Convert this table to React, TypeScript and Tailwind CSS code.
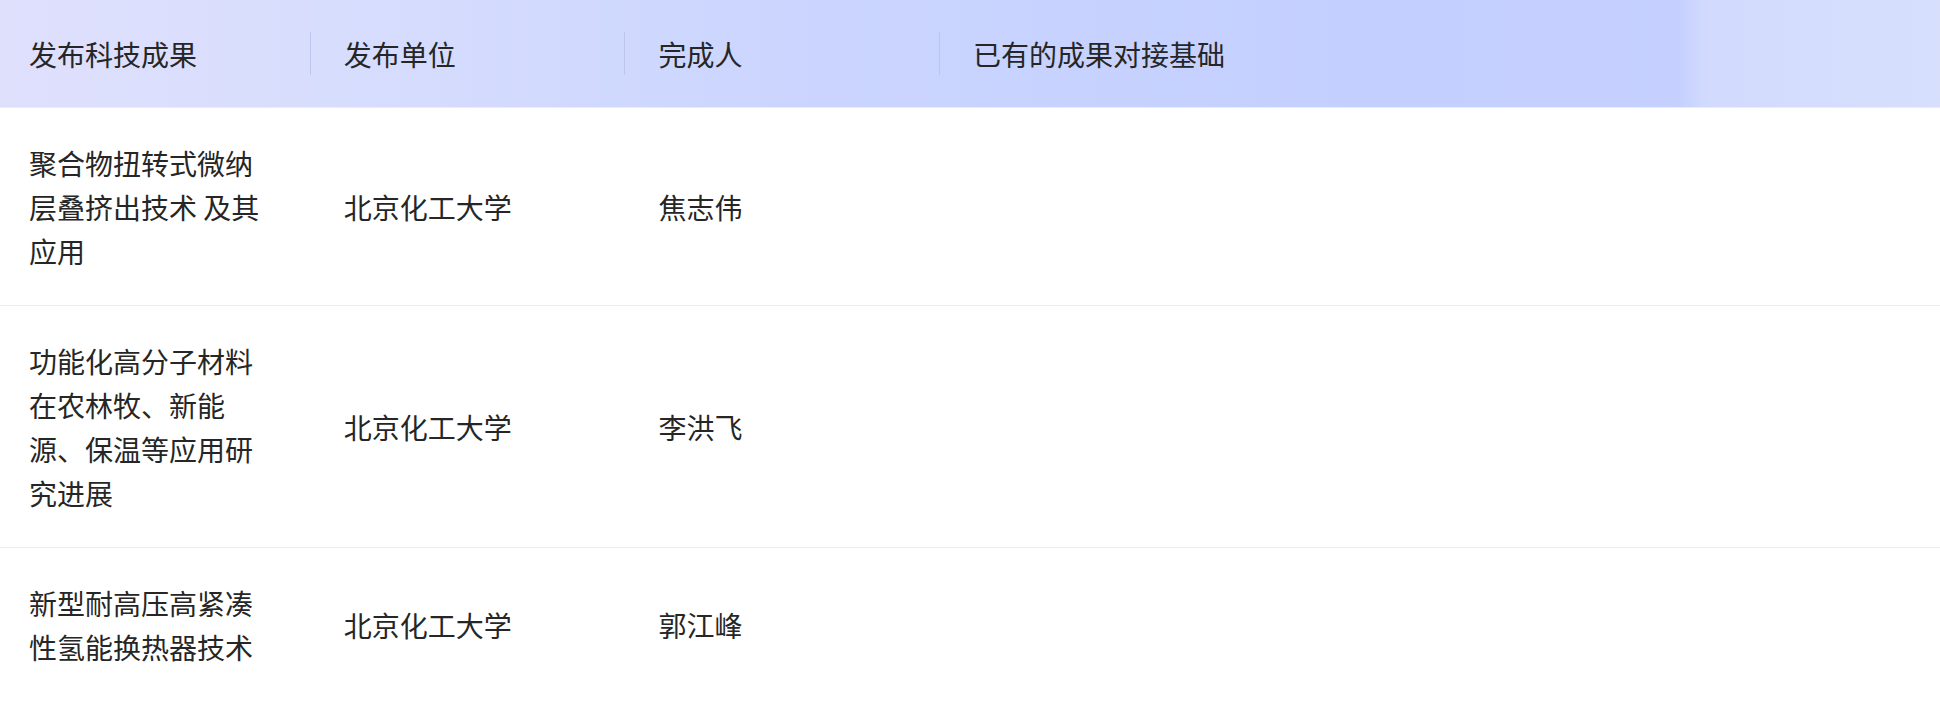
const columns = ["发布科技成果", "发布单位", "完成人", "已有的成果对接基础"];

const rows = [
  {
    title: "聚合物扭转式微纳层叠挤出技术 及其应用",
    unit: "北京化工大学",
    person: "焦志伟",
    basis: "",
  },
  {
    title: "功能化高分子材料在农林牧、新能源、保温等应用研究进展",
    unit: "北京化工大学",
    person: "李洪飞",
    basis: "",
  },
  {
    title: "新型耐高压高紧凑性氢能换热器技术",
    unit: "北京化工大学",
    person: "郭江峰",
    basis: "",
  },
];

export default function App() {
  return (
    <div className="min-h-[701px] w-full bg-white font-['Noto_Sans_CJK_SC','Noto_Sans',sans-serif] text-[28px] text-[#262626]">
      <div className="grid h-[107px] grid-cols-[314.7px_314.7px_314.7px_1fr] bg-[linear-gradient(90deg,#dfe0fc_0%,#d7ddfd_18%,#cbd5fe_40%,#c3cfff_70%,#c5d0ff_86.5%,#d2dbfd_88%,#d7dffd_100%)]">
        {columns.map((c, i) => (
          <div key={c} className="flex items-center justify-between pl-[29px]">
            <span className="leading-[44px]">{c}</span>
            {i < columns.length - 1 && <span className="mr-[4px] h-[43px] w-px bg-[#bcc5ea]" />}
          </div>
        ))}
      </div>
      <div className="h-px bg-[#ededed]" />
      {rows.map((r) => (
        <div key={r.title} className="grid grid-cols-[314.7px_314.7px_314.7px_1fr] border-b border-[#ededed]">
          <div className="flex items-center py-[32.5px] pl-[29px] pr-[46px] leading-[44px]">{r.title}</div>
          <div className="flex items-center pl-[29px] leading-[44px]">{r.unit}</div>
          <div className="flex items-center pl-[29px] leading-[44px]">{r.person}</div>
          <div className="flex items-center pl-[29px] leading-[44px]">{r.basis}</div>
        </div>
      ))}
    </div>
  );
}
